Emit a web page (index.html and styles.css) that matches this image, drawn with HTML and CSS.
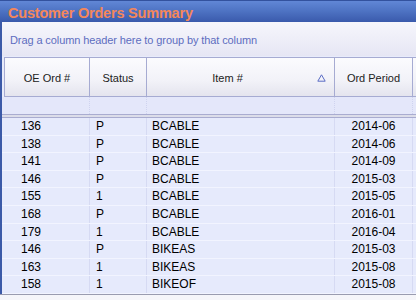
FILE: index.html
```html
<!DOCTYPE html>
<html lang="en">

<head>
    <meta charset="UTF-8">
    <meta name="viewport" content="width=device-width, initial-scale=1.0">
    <title>Customer Orders Summary</title>
    <link rel="stylesheet" href="styles.css">
</head>

<body>
    <div class="window">
        <div class="title-bar">Customer Orders Summary</div>
        <div class="group-panel">Drag a column header here to group by that column</div>

        <div class="grid">
            <div class="header-row">
                <div class="hcell col-ord">OE Ord #</div>
                <div class="hcell col-status">Status</div>
                <div class="hcell col-item sorted">
                    Item #
                    <svg class="sort-icon" width="9" height="8" viewBox="0 0 9 8">
                        <path d="M4.5 0.8 L8.2 7.2 L0.8 7.2 Z" fill="none" stroke="#5a6cc4" stroke-width="1"/>
                    </svg>
                </div>
                <div class="hcell col-period">Ord Period</div>
                <div class="hcell col-more"></div>
            </div>

            <div class="filter-row">
                <div class="fcell col-ord"></div>
                <div class="fcell col-status"></div>
                <div class="fcell col-item"></div>
                <div class="fcell col-period"></div>
                <div class="fcell col-more"></div>
            </div>

            <div class="separator"></div>

            <div class="rows" id="rows"></div>
        </div>
        <div class="footer"></div>
    </div>

    <script>
        let orders = [
            ['136', 'P', 'BCABLE', '2014-06'],
            ['138', 'P', 'BCABLE', '2014-06'],
            ['141', 'P', 'BCABLE', '2014-09'],
            ['146', 'P', 'BCABLE', '2015-03'],
            ['155', '1', 'BCABLE', '2015-05'],
            ['168', 'P', 'BCABLE', '2016-01'],
            ['179', '1', 'BCABLE', '2016-04'],
            ['146', 'P', 'BIKEAS', '2015-03'],
            ['163', '1', 'BIKEAS', '2015-08'],
            ['158', '1', 'BIKEOF', '2015-08']
        ];

        let rows = document.getElementById('rows');
        let classes = ['col-ord', 'col-status', 'col-item', 'col-period'];

        orders.forEach(function (order) {
            let row = document.createElement('div');
            row.className = 'data-row';
            order.forEach(function (value, i) {
                let cell = document.createElement('div');
                cell.className = 'cell ' + classes[i];
                cell.textContent = value;
                row.appendChild(cell);
            });
            let last = document.createElement('div');
            last.className = 'cell col-more';
            row.appendChild(last);
            rows.appendChild(row);
        });
    </script>
</body>

</html>
```

FILE: styles.css
```css
body {
    margin: 0;
    font-family: "Liberation Sans", Arial, sans-serif;
    background-color: #ffffff;
    width: 416px;
    height: 300px;
    overflow: hidden;
}

.window {
    width: 416px;
    height: 300px;
    overflow: hidden;
    background-color: #e8ebfb;
}

.title-bar {
    height: 22px;
    line-height: 24px;
    padding-left: 8px;
    box-sizing: border-box;
    border-top: 1px solid #33529e;
    background: linear-gradient(#6187d6, #4f74c4 45%, #3a5aac);
    color: #f5875a;
    font-size: 14.5px;
    font-weight: bold;
    letter-spacing: -0.2px;
    white-space: nowrap;
}

.group-panel {
    height: 34px;
    line-height: 36px;
    padding-left: 8px;
    border-left: 2px solid #3c5aa8;
    background: linear-gradient(#f6f6fc, #e6e6f4);
    color: #5d6dc0;
    font-size: 11px;
    letter-spacing: -0.1px;
    white-space: nowrap;
}

.grid {
    border-left: 2px solid #3c5aa8;
    width: 414px;
    overflow: hidden;
}

.header-row,
.filter-row,
.data-row {
    display: flex;
    white-space: nowrap;
}

.col-ord {
    width: 88px;
    flex: none;
}

.col-status {
    width: 57px;
    flex: none;
}

.col-item {
    width: 188px;
    flex: none;
}

.col-period {
    width: 78px;
    flex: none;
}

.col-more {
    width: 40px;
    flex: none;
}

/* header */
.header-row {
    height: 40px;
    margin-top: 1px;
}

.hcell {
    box-sizing: border-box;
    height: 40px;
    line-height: 40px;
    text-align: center;
    font-size: 11px;
    color: #222222;
    background: linear-gradient(#fbfbfe, #f2f2f8 60%, #e4e4ee);
    border: 1px solid #a6abd2;
    border-left: none;
}

.header-row .col-ord {
    width: 86px;
    margin-left: 2px;
    border-left: 1px solid #a6abd2;
}

.hcell.sorted {
    position: relative;
    padding-right: 26px;
}

.sort-icon {
    position: absolute;
    right: 8px;
    top: 16px;
}

/* filter row */
.filter-row {
    height: 17px;
    background-color: #e4e7fa;
}

.fcell {
    box-sizing: border-box;
    border-right: 1px dotted #cfd3ef;
}

.separator {
    height: 2px;
    border-top: 1px solid #a9acd0;
    border-bottom: 1px solid #a9acd0;
    background-color: #dcdde9;
}

/* data rows */
.data-row {
    height: 17.6px;
    box-sizing: border-box;
    border-bottom: 1px solid #f2f4ff;
    background-color: #e6eafc;
}

.cell {
    box-sizing: border-box;
    line-height: 17px;
    font-size: 12px;
    color: #000000;
    border-right: 1px solid #d6daf3;
    overflow: hidden;
}

.cell.col-ord {
    padding-left: 19px;
}

.cell.col-status {
    padding-left: 6px;
}

.cell.col-item {
    padding-left: 5px;
}

.cell.col-period {
    text-align: center;
}

.footer {
    border-top: 1px solid #9a9cb0;
    height: 10px;
    background-color: #f6f6fa;
}
```
